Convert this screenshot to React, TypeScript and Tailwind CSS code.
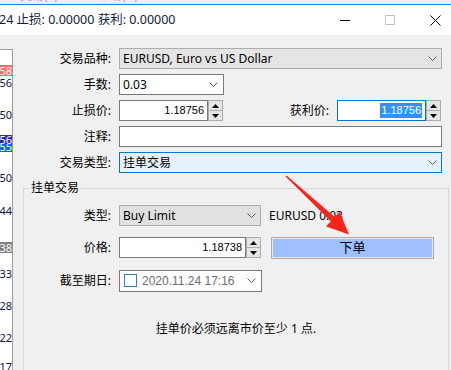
import type { ReactNode } from "react";

function Chevron() {
  return (
    <svg width="9" height="5" viewBox="0 0 9 5" className="shrink-0">
      <polyline points="0.5,0.5 4.5,4.5 8.5,0.5" fill="none" stroke="#5f5f5f" strokeWidth="1" />
    </svg>
  );
}

function Spinner() {
  return (
    <div className="flex h-[21px] w-[15px] shrink-0 flex-col border border-[#adadad] bg-[#e5e5e5]">
      <div className="flex flex-1 items-center justify-center border-b border-[#adadad]">
        <svg width="7" height="4" viewBox="0 0 7 4">
          <polygon points="3.5,0 7,4 0,4" fill="#000" />
        </svg>
      </div>
      <div className="flex flex-1 items-center justify-center">
        <svg width="7" height="4" viewBox="0 0 7 4">
          <polygon points="0,0 7,0 3.5,4" fill="#000" />
        </svg>
      </div>
    </div>
  );
}

function Row({ label, labelWidth, children }: { label: string; labelWidth: string; children: ReactNode }) {
  return (
    <div className="flex h-[21px] items-center">
      <div className={`${labelWidth} shrink-0 text-right`}>{label}</div>
      <div className="ml-[8px] flex flex-1 items-center">{children}</div>
    </div>
  );
}

function ChartScale() {
  return (
    <div className="relative mt-[14px] h-[330px] w-[13px] shrink-0 overflow-hidden border-t border-r border-[#9c9c9c] bg-white text-[11px] leading-[11px] text-[#10104a]">
      <div className="absolute left-0 top-[15px] flex h-[11px] w-full justify-end bg-[#ff6b6b] text-white"><span className="whitespace-nowrap">58</span></div>
      <div className="absolute left-0 top-[27px] flex h-[11px] w-full justify-end"><span className="whitespace-nowrap">56</span></div>
      <div className="absolute left-0 top-[59px] flex h-[11px] w-full justify-end"><span className="whitespace-nowrap">50</span></div>
      <div className="absolute left-0 top-[85px] flex h-[9px] w-full justify-end overflow-hidden bg-[#2a2ab4] leading-[9px] text-white"><span className="whitespace-nowrap">56</span></div>
      <div className="absolute left-0 top-[94px] flex h-[8px] w-full justify-end overflow-hidden bg-[#0a66ff] leading-[6px] text-white"><span className="whitespace-nowrap">55</span></div>
      <div className="absolute left-0 top-[122px] flex h-[11px] w-full justify-end"><span className="whitespace-nowrap">50</span></div>
      <div className="absolute left-0 top-[155px] flex h-[11px] w-full justify-end"><span className="whitespace-nowrap">44</span></div>
      <div className="absolute left-0 top-[192px] flex h-[11px] w-full justify-end bg-[#808080] text-white"><span className="whitespace-nowrap">38</span></div>
      <div className="absolute left-0 top-[218px] flex h-[11px] w-full justify-end"><span className="whitespace-nowrap">33</span></div>
      <div className="absolute left-0 top-[250px] flex h-[11px] w-full justify-end"><span className="whitespace-nowrap">28</span></div>
      <div className="absolute left-0 top-[282px] flex h-[11px] w-full justify-end"><span className="whitespace-nowrap">22</span></div>
      <div className="absolute left-0 top-[311px] flex h-[11px] w-full justify-end"><span className="whitespace-nowrap">17</span></div>
    </div>
  );
}

export default function App() {
  const num = "font-['Liberation_Sans',sans-serif] text-[11px]";
  return (
    <div className="relative h-[370px] w-[451px] overflow-hidden bg-[#f0f0f0] font-['Noto_Sans','Noto_Sans_CJK_SC',sans-serif] text-[12px] text-black">
      {/* menu bar, cut off */}
      <div className="h-[4px] overflow-hidden">
        <div className="-mt-[11px] flex gap-[40px] pl-[20px] text-[12px] leading-[14px] text-[#a8a8a8]">
          <span>交易(T)</span>
          <span>帮助(H)</span>
        </div>
      </div>
      <div className="h-px bg-[#2b7fd6]" />

      {/* title bar */}
      <div className="flex h-[30px] items-center bg-white">
        <div className="-ml-[1px] flex-1 whitespace-nowrap text-[12.5px] text-[#14213a]">24 止损: 0.00000 获利: 0.00000</div>
        <svg width="10" height="1" className="mr-[35px]">
          <rect width="10" height="1" fill="#000" />
        </svg>
        <svg width="10" height="10" className="mr-[35px]">
          <rect x="0.5" y="0.5" width="9" height="9" fill="none" stroke="#c4c4c4" />
        </svg>
        <svg width="11" height="11" className="mr-[10px]">
          <path d="M0.5 0.5 L10.5 10.5 M10.5 0.5 L0.5 10.5" stroke="#000" strokeWidth="1" />
        </svg>
      </div>

      <div className="flex">
        <ChartScale />
        <div className="w-px shrink-0" />

        <div className="flex-1">
          <div className="flex flex-col gap-[5px] pt-[13px] pr-[9px]">
            <Row label="交易品种:" labelWidth="w-[97px]">
              <div className="flex h-[21px] flex-1 items-center justify-between border border-[#adadad] bg-[#e5e5e5] pl-[3px] pr-[4px]">
                <span>EURUSD, Euro vs US Dollar</span>
                <Chevron />
              </div>
            </Row>
            <Row label="手数:" labelWidth="w-[97px]">
              <div className="flex h-[21px] w-[105px] items-center justify-between border border-[#7a7a7a] bg-white pl-[3px] pr-[5px]">
                <span>0.03</span>
                <Chevron />
              </div>
            </Row>
            <Row label="止损价:" labelWidth="w-[97px]">
              <div className={`flex h-[21px] w-[89px] items-center justify-end border border-[#7a7a7a] bg-white pr-[3px] ${num}`}>1.18756</div>
              <Spinner />
              <div className="flex-1" />
              <div className="shrink-0">获利价:</div>
              <div className={`ml-[8px] flex h-[21px] w-[89px] items-center justify-end border border-[#0078d7] bg-white pr-[3px] ${num}`}>
                <span className="bg-[#3390ff] px-[1px] leading-[15px] text-white">1.18756</span>
              </div>
              <Spinner />
              <div className="w-px" />
            </Row>
            <Row label="注释:" labelWidth="w-[97px]">
              <div className="h-[21px] flex-1 border border-[#7a7a7a] bg-white" />
            </Row>
            <Row label="交易类型:" labelWidth="w-[97px]">
              <div className="flex h-[21px] flex-1 items-center justify-between border border-[#0078d7] bg-[#e5f1fb] pl-[3px] pr-[4px]">
                <span>挂单交易</span>
                <Chevron />
              </div>
            </Row>
          </div>

          <fieldset className="mt-[7px] ml-[9px] mr-[2px] h-[200px] border border-[#d7d7d7]">
            <legend className="ml-[5px] px-[2px] leading-[16px]">挂单交易</legend>
            <div className="mt-[9px] flex flex-col">
              <Row label="类型:" labelWidth="w-[87px]">
                <div className="flex h-[21px] w-[142px] items-center justify-between border border-[#adadad] bg-[#e1e1e1] pl-[3px] pr-[4px]">
                  <span>Buy Limit</span>
                  <Chevron />
                </div>
                <span className="ml-[8px] whitespace-nowrap">EURUSD 0.03</span>
              </Row>
              <div className="mt-[11px]">
                <Row label="价格:" labelWidth="w-[87px]">
                  <div className={`flex h-[21px] w-[127px] items-center justify-end border border-[#7a7a7a] bg-white pr-[3px] ${num}`}>1.18738</div>
                  <Spinner />
                  <button className="ml-[10px] h-[22px] w-[163px] border border-[#adadad] bg-[#e8e8e8] p-[1px]">
                    <div className="flex h-full w-full items-center justify-center bg-[#9fbfff] text-[13px]">下单</div>
                  </button>
                </Row>
              </div>
              <div className="mt-[12px]">
                <Row label="截至期日:" labelWidth="w-[87px]">
                  <div className="flex h-[22px] w-[143px] items-center overflow-hidden border border-[#7a7a7a] bg-white">
                    <div className="ml-[4px] h-[13px] w-[13px] shrink-0 border border-[#2f7fd0] bg-white" />
                    <span className={`ml-[5px] w-[100px] shrink-0 overflow-hidden whitespace-nowrap text-[#6d6d6d] ${num} text-[12px]`}>2020.11.24 17:16</span>
                    <div className="ml-[5px]">
                      <Chevron />
                    </div>
                  </div>
                </Row>
              </div>
              <div className="mt-[30px] text-center leading-[16px]">挂单价必须远离市价至少 1 点.</div>
            </div>
          </fieldset>
        </div>
      </div>

      {/* annotation arrow */}
      <svg className="pointer-events-none absolute left-0 top-0" width="451" height="370" viewBox="0 0 451 370">
        <polygon
          points="285.5,176.6 330.8,221.3 326,226.5 349,234.5 339.6,211.7 334.8,216.9 286.5,175.4"
          fill="#f8261a"
        />
      </svg>
    </div>
  );
}
